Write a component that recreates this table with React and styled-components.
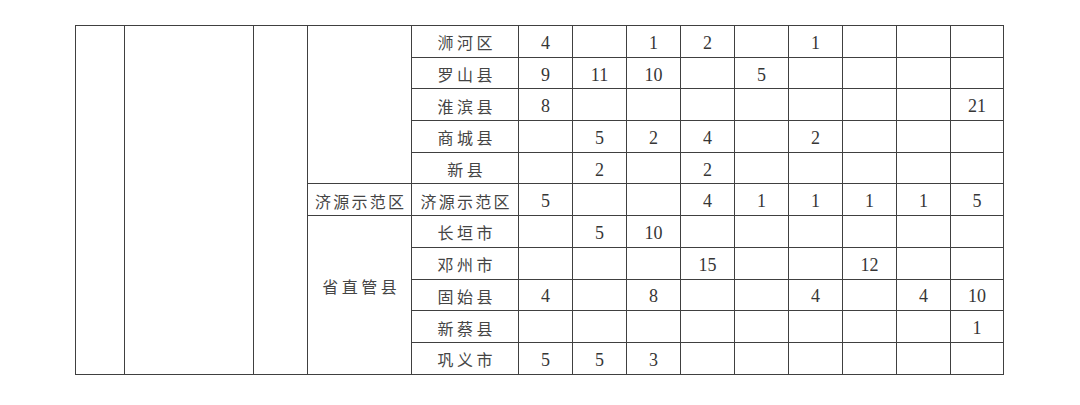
import React from 'react';
import styled, { createGlobalStyle } from 'styled-components';

const rows = [
  { name: '浉河区', vals: ['4', '', '1', '2', '', '1', '', '', ''] },
  { name: '罗山县', vals: ['9', '11', '10', '', '5', '', '', '', ''] },
  { name: '淮滨县', vals: ['8', '', '', '', '', '', '', '', '21'] },
  { name: '商城县', vals: ['', '5', '2', '4', '', '2', '', '', ''] },
  { name: '新县', vals: ['', '2', '', '2', '', '', '', '', ''] },
  { name: '济源示范区', group: '济源示范区', vals: ['5', '', '', '4', '1', '1', '1', '1', '5'] },
  { name: '长垣市', group: '省直管县', span: 5, vals: ['', '5', '10', '', '', '', '', '', ''] },
  { name: '邓州市', vals: ['', '', '', '15', '', '', '12', '', ''] },
  { name: '固始县', vals: ['4', '', '8', '', '', '4', '', '4', '10'] },
  { name: '新蔡县', vals: ['', '', '', '', '', '', '', '', '1'] },
  { name: '巩义市', vals: ['5', '5', '3', '', '', '', '', '', ''] },
];

const colWidths = [49, 129, 54, 104, 107, 54, 54, 54, 54, 54, 54, 54, 54, 53];

function App() {
  return (
    <>
      <GlobalStyle />
      <Page>
        <Table>
          <colgroup>
            {colWidths.map((w, i) => (
              <Col key={i} $w={w} />
            ))}
          </colgroup>
          <tbody>
            {rows.map((row, i) => (
              <Row key={row.name}>
                {i === 0 && (
                  <>
                    <Cell rowSpan={11} />
                    <Cell rowSpan={11} />
                    <Cell rowSpan={11} />
                    <Cell rowSpan={5} />
                  </>
                )}
                {row.group && (
                  <NameCell rowSpan={row.span || 1} $tight={row.group.length > 4} $lift={row.span > 1}>
                    {row.group}
                  </NameCell>
                )}
                <NameCell $tight={row.name.length > 4}>{row.name}</NameCell>
                {row.vals.map((v, j) => (
                  <NumCell key={j}>{v}</NumCell>
                ))}
              </Row>
            ))}
          </tbody>
        </Table>
      </Page>
    </>
  );
}

export default App;

// -------------------------------------------------- styling ----------------------------------------------
const GlobalStyle = createGlobalStyle`
  html, body {
    margin: 0;
    padding: 0;
    background: #fff;
  }
`;

const Page = styled.div`
  width: 1080px;
  height: 405px;
  box-sizing: border-box;
  padding: 25px 0 0 75px;
  background: #fff;
`;

const Table = styled.table`
  border-collapse: collapse;
  table-layout: fixed;
  width: 929px;
  color: #363636;
`;

const Col = styled.col`
  width: ${({ $w }) => $w}px;
`;

const Row = styled.tr`
  height: 31.7px;
`;

const Cell = styled.td`
  border: 1px solid #404040;
  padding: 0;
  text-align: center;
  vertical-align: middle;
`;

const NameCell = styled(Cell)`
  font-family: 'Noto Sans CJK SC', sans-serif;
  font-size: 16px;
  color: #454545;
  letter-spacing: ${({ $tight }) => ($tight ? '2.3px' : '3.5px')};
  text-indent: ${({ $tight }) => ($tight ? '2.3px' : '3.5px')};
  line-height: 1;
  padding-top: 2px;
  padding-bottom: ${({ $lift }) => ($lift ? '20px' : '0')};
`;

const NumCell = styled(Cell)`
  font-family: 'Liberation Serif', 'Times New Roman', serif;
  font-size: 18px;
  line-height: 1;
  padding-top: 3px;
`;
